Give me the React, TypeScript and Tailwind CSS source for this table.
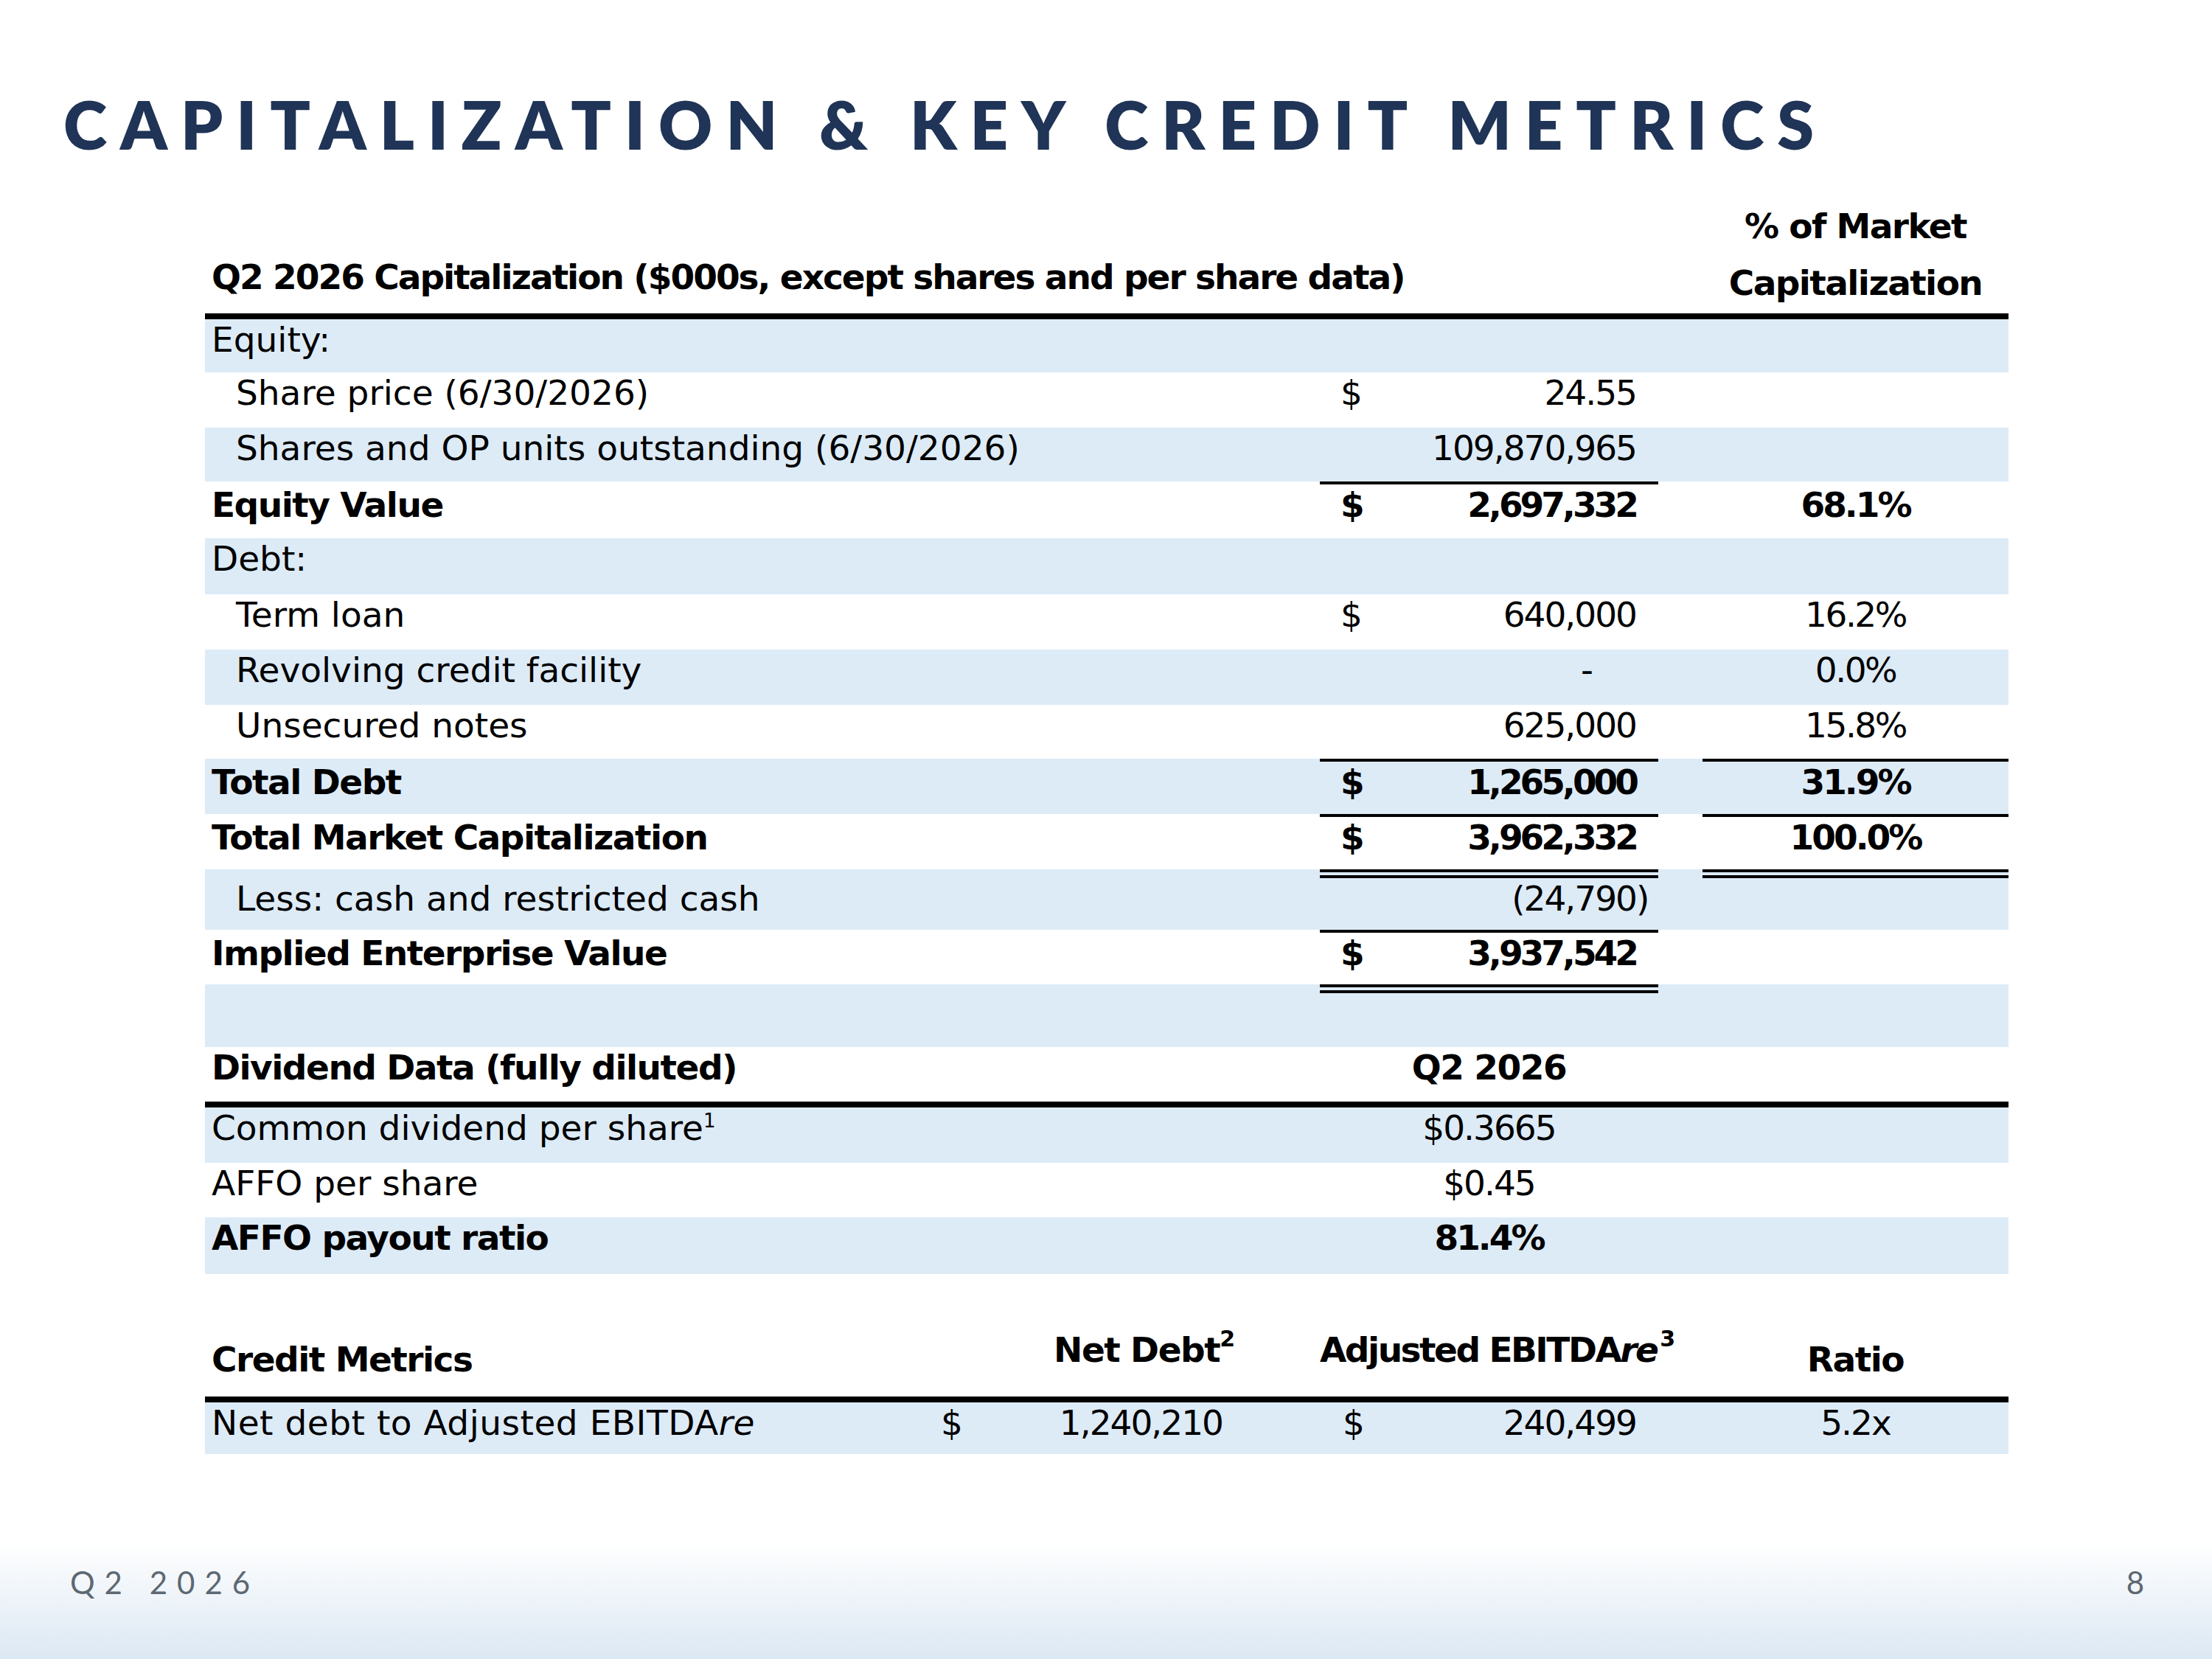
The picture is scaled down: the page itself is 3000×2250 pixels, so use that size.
import React from 'react';

type B = 'none' | 'single' | 'double';

const lineB: Record<B, string> = {
  none: '',
  single: 'border-t-4 border-black',
  double: 'border-t-[12px] border-double border-black',
};
const ghostB: Record<B, string> = {
  none: '',
  single: 'border-t-4 border-transparent',
  double: 'border-t-[12px] border-transparent',
};

type RowProps = {
  h: string;
  blue?: boolean;
  line?: B;
  mLine?: boolean;
  pLine?: boolean;
  label: React.ReactNode;
  indent?: boolean;
  bold?: boolean;
  dollar?: boolean;
  value?: React.ReactNode;
  pct?: string;
};

function Row({ h, blue, line = 'none', mLine, pLine, label, indent, bold, dollar, value, pct }: RowProps) {
  return (
    <div className={`flex ${h} ${blue ? 'bg-[#ddebf7]' : ''}`}>
      <div
        className={`w-[1512px] ${indent ? 'pl-[42px]' : 'pl-[9px]'} ${ghostB[line]} ${
          bold ? 'font-bold tracking-[-1.5px]' : ''
        }`}
      >
        {label}
      </div>
      <div
        className={`w-[459px] flex justify-between pl-[28px] pr-[30px] ${mLine ? lineB[line] : ghostB[line]} ${
          bold ? 'font-bold tracking-[-4px]' : 'tracking-[-2px]'
        }`}
      >
        <span>{dollar ? '$' : ''}</span>
        <span>{value}</span>
      </div>
      <div className={`w-[60px] ${ghostB[line]}`} />
      <div
        className={`w-[415px] text-center ${pLine ? lineB[line] : ghostB[line]} ${
          bold ? 'font-bold tracking-[-3px]' : 'tracking-[-2.5px]'
        }`}
      >
        {pct}
      </div>
    </div>
  );
}

function DivRow({ h, blue, label, value, bold }: { h: string; blue?: boolean; label: React.ReactNode; value: string; bold?: boolean }) {
  return (
    <div className={`flex ${h} ${blue ? 'bg-[#ddebf7]' : ''}`}>
      <div className={`w-[1512px] pl-[9px] ${bold ? 'font-bold tracking-[-1.5px]' : ''}`}>{label}</div>
      <div className={`w-[459px] text-center ${bold ? 'font-bold tracking-[-3px]' : 'tracking-[-2px]'}`}>{value}</div>
    </div>
  );
}

export default function App() {
  return (
    <div className="w-[3000px] h-[2250px] bg-white flex flex-col overflow-hidden">
      {/* Title */}
      <div className="h-[270px] pt-[123px] pl-[86px]">
        <h1 className="font-['Lato',sans-serif] font-extrabold text-[90px] leading-none tracking-[18px] text-[#1f3456] whitespace-nowrap">
          CAPITALIZATION &amp; KEY CREDIT METRICS
        </h1>
      </div>

      {/* Table */}
      <div className="ml-[278px] w-[2446px] font-['DejaVu_Sans',sans-serif] text-[47px] leading-[55px] text-black">
        {/* header */}
        <div className="flex h-[155px] items-end">
          <div className="w-[1971px] pl-[9px] pb-[22px] font-bold tracking-[-2px]">
            Q2 2026 Capitalization ($000s, except shares and per share data)
          </div>
          <div className="w-[60px]" />
          <div className="w-[415px] text-center font-bold tracking-[-1.6px] leading-[77px] pb-[3px]">
            % of Market
            <br />
            Capitalization
          </div>
        </div>
        <div className="h-[8px] bg-black" />

        <Row h="h-[72px]" blue label="Equity:" />
        <Row h="h-[75px]" indent label="Share price (6/30/2026)" dollar value="24.55" />
        <Row h="h-[73px]" blue indent label="Shares and OP units outstanding (6/30/2026)" value="109,870,965" />
        <Row h="h-[77px]" line="single" mLine bold label="Equity Value" dollar value="2,697,332" pct="68.1%" />
        <Row h="h-[76px]" blue label="Debt:" />
        <Row h="h-[75px]" indent label="Term loan" dollar value="640,000" pct="16.2%" />
        <Row
          h="h-[75px]"
          blue
          indent
          label="Revolving credit facility"
          value={<span className="mr-[60px]">-</span>}
          pct="0.0%"
        />
        <Row h="h-[73px]" indent label="Unsecured notes" value="625,000" pct="15.8%" />
        <Row h="h-[75px]" blue line="single" mLine pLine bold label="Total Debt" dollar value="1,265,000" pct="31.9%" />
        <Row
          h="h-[75px]"
          line="single"
          mLine
          pLine
          bold
          label="Total Market Capitalization"
          dollar
          value="3,962,332"
          pct="100.0%"
        />
        <Row
          h="h-[82px]"
          blue
          line="double"
          mLine
          pLine
          indent
          label="Less: cash and restricted cash"
          value={
            <span>
              (24,790<span className="inline-block -mr-[18px]">)</span>
            </span>
          }
        />
        <Row h="h-[74px]" line="single" mLine bold label="Implied Enterprise Value" dollar value="3,937,542" />
        <Row h="h-[85px]" blue line="double" mLine label="" />

        {/* Dividend data */}
        <div className="flex h-[74px]">
          <div className="w-[1512px] pl-[9px] font-bold tracking-[-1.5px]">Dividend Data (fully diluted)</div>
          <div className="w-[459px] text-center font-bold tracking-[-1.5px]">Q2 2026</div>
        </div>
        <div className="h-[8px] bg-black" />
        <DivRow
          h="h-[75px]"
          blue
          label={
            <span>
              Common dividend per share<span className="relative -top-[17px] text-[26px]">1</span>
            </span>
          }
          value="$0.3665"
        />
        <DivRow h="h-[74px]" label="AFFO per share" value="$0.45" />
        <DivRow h="h-[77px]" blue bold label="AFFO payout ratio" value="81.4%" />

        {/* Credit metrics */}
        <div className="flex h-[166px] items-end font-bold tracking-[-1.5px]">
          <div className="w-[970px] pl-[9px] pb-[23px]">Credit Metrics</div>
          <div className="w-[435px] text-right pr-[8px] pb-[30px]">
            Net Debt<span className="relative -top-[21px] text-[30px] tracking-normal">2</span>
          </div>
          <div className="w-[107px]" />
          <div className="w-[459px] text-center pb-[30px] whitespace-nowrap tracking-[-2.5px]">
            Adjusted EBITDA<span className="italic">re</span>
            <span className="relative -top-[21px] text-[30px] ml-[4px] tracking-normal">3</span>
          </div>
          <div className="w-[60px]" />
          <div className="w-[415px] text-center pb-[23px]">Ratio</div>
        </div>
        <div className="h-[8px] bg-black" />
        <div className="flex h-[70px] bg-[#ddebf7]">
          <div className="w-[970px] pl-[9px] tracking-[0.5px]">
            Net debt to Adjusted EBITDA<span className="italic">re</span>
          </div>
          <div className="w-[435px] flex justify-between pl-[28px] pr-[25px] tracking-[-2px]">
            <span>$</span>
            <span>1,240,210</span>
          </div>
          <div className="w-[107px]" />
          <div className="w-[459px] flex justify-between pl-[31px] pr-[30px] tracking-[-2px]">
            <span>$</span>
            <span>240,499</span>
          </div>
          <div className="w-[60px]" />
          <div className="w-[415px] text-center tracking-[-2px]">5.2x</div>
        </div>
      </div>

      <div className="flex-1" />

      {/* Footer */}
      <div className="h-[160px] bg-linear-to-b from-white to-[#dce8f3] flex justify-between items-start pt-[35px] pl-[95px] pr-[79px] font-['Lato',sans-serif] text-[42px] leading-none text-[#5d6872] tracking-[13px]">
        <span>Q2 2026</span>
        <span>8</span>
      </div>
    </div>
  );
}
